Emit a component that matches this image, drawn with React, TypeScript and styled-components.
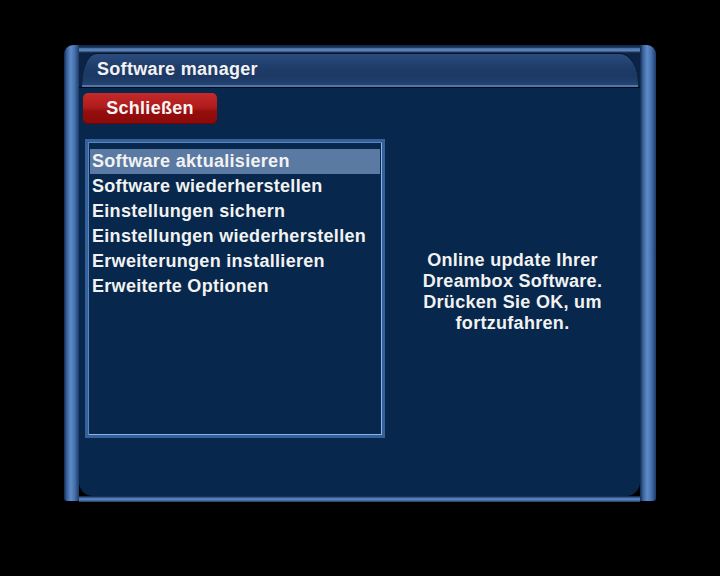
import styled, { createGlobalStyle } from "styled-components";

const GlobalStyle = createGlobalStyle`
    html, body {
        margin: 0;
        padding: 0;
        background: #000;
    }
    body {
        font-family: "Liberation Sans", Arial, sans-serif;
    }
`;

const menuItems = [
    "Software aktualisieren",
    "Software wiederherstellen",
    "Einstellungen sichern",
    "Einstellungen wiederherstellen",
    "Erweiterungen installieren",
    "Erweiterte Optionen",
];

export default function App() {
    return (
        <>
            <GlobalStyle />
            <Screen>
                <Window>
                    <LeftPillar />
                    <TopStrip />
                    <Main>
                        <TitleRow>
                            <TitleBar>Software manager</TitleBar>
                        </TitleRow>
                        <Body>
                            <RedButton>Schließen</RedButton>
                            <Content>
                                <ListBox>
                                    {menuItems.map((item, i) => (
                                        <ListRow key={item} selected={i === 0}>
                                            {item}
                                        </ListRow>
                                    ))}
                                </ListBox>
                                <Description>
                                    Online update Ihrer
                                    <br />
                                    Dreambox Software.
                                    <br />
                                    Drücken Sie OK, um
                                    <br />
                                    fortzufahren.
                                </Description>
                            </Content>
                        </Body>
                    </Main>
                    <BottomStrip />
                    <RightPillar />
                </Window>
            </Screen>
        </>
    );
}

const Screen = styled.div`
    width: 720px;
    height: 576px;
    background: #000;
    padding: 45px 64px 0 64px;
    box-sizing: border-box;
`;

const Window = styled.div`
    width: 592px;
    height: 457px;
    display: grid;
    grid-template-columns: 15px 1fr 16px;
    grid-template-rows: 8px 1fr 6px;
`;

const pillar = `
    grid-row: 1 / span 3;
    background: linear-gradient(
        90deg,
        #13294d 0%,
        #3b64a0 20%,
        #5e8ac6 45%,
        #4673b0 70%,
        #1d3a68 100%
    );
`;

const LeftPillar = styled.div`
    ${pillar};
    grid-column: 1;
    border-radius: 9px 0 0 3px;
    margin-bottom: 1px;
`;

const RightPillar = styled.div`
    ${pillar};
    grid-column: 3;
    border-radius: 0 9px 3px 0;
    margin-bottom: 1px;
`;

const TopStrip = styled.div`
    grid-row: 1;
    grid-column: 2;
    background: linear-gradient(
        180deg,
        #0d1f3c 0%,
        #1c3862 30%,
        #4f78b0 45%,
        #5c84bc 70%,
        #0b1a33 100%
    );
`;

const BottomStrip = styled.div`
    grid-row: 3;
    grid-column: 2;
    background: linear-gradient(
        180deg,
        #0a1a33 0%,
        #4a74ae 35%,
        #5a84bc 60%,
        #1d3a68 100%
    );
`;

const Main = styled.div`
    grid-row: 2;
    grid-column: 2;
    background: #07284c;
    border-radius: 0 0 14px 14px;
    display: flex;
    flex-direction: column;
    overflow: hidden;
`;

const TitleRow = styled.div`
    background: #0b2446;
    padding-left: 3px;
    padding-right: 2px;
    border-bottom: 1px solid #020a18;
`;

const TitleBar = styled.div`
    height: 31px;
    display: flex;
    align-items: center;
    padding-left: 15px;
    color: #f2f2f2;
    font-size: 18px;
    font-weight: 700;
    letter-spacing: 0.3px;
    background: linear-gradient(
        180deg,
        #2b4d7e 0%,
        #1f3d6a 40%,
        #1c3864 70%,
        #234371 100%
    );
    border-top: 1px solid #06142b;
    border-bottom: 2px solid #5076ab;
    border-radius: 14px 18px 0 0 / 34px 30px 0 0;
`;

const Body = styled.div`
    display: flex;
    flex-direction: column;
    padding: 5px 0 0 4px;
`;

const RedButton = styled.div`
    width: 134px;
    height: 31px;
    border-radius: 5px;
    display: flex;
    align-items: center;
    justify-content: center;
    color: #f4f4f4;
    font-size: 18px;
    font-weight: 700;
    letter-spacing: 0.3px;
    background: linear-gradient(
        180deg,
        #c42a2a 0%,
        #b01c1c 45%,
        #950d0d 60%,
        #8c0a0a 100%
    );
    box-shadow: inset 0 -1px 0 #6a0606;
`;

const Content = styled.div`
    display: flex;
    align-items: center;
    margin-top: 15px;
    padding-left: 2px;
`;

const ListBox = styled.div`
    width: 300px;
    height: 299px;
    box-sizing: border-box;
    border: 3px solid #35609a;
    box-shadow: inset 1px 1px 0 #5a86bf, inset -1px -1px 0 #8bb4e6;
    padding: 7px 2px 0 2px;
    display: flex;
    flex-direction: column;
`;

const ListRow = styled.div<{ selected?: boolean }>`
    height: 25px;
    display: flex;
    align-items: center;
    padding-left: 2px;
    color: #f2f2f2;
    font-size: 18px;
    font-weight: 700;
    letter-spacing: 0.3px;
    white-space: nowrap;
    background: ${(p) => (p.selected ? "#5a7aa3" : "transparent")};
`;

const Description = styled.div`
    flex: 1;
    text-align: center;
    color: #f2f2f2;
    font-size: 18px;
    font-weight: 700;
    letter-spacing: 0.3px;
    line-height: 21px;
    margin-top: 6px;
`;
